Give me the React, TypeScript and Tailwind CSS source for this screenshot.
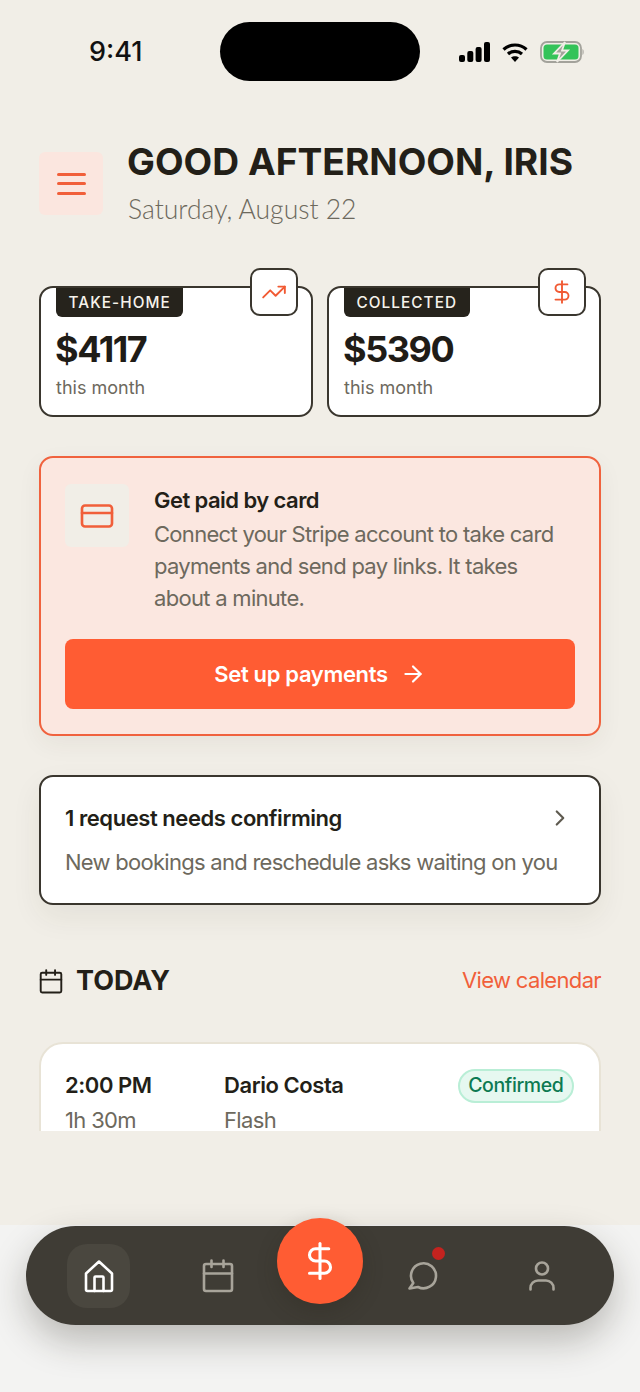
import type { ReactNode } from 'react'
import { ArrowRight, ChevronRight, CreditCard, DollarSign, TrendingUp } from 'lucide-react'

function CalendarIcon({ width, height, stroke }: { width: number; height: number; stroke: number }) {
  return (
    <svg width={width} height={height} viewBox="0 0 32 34" fill="none" stroke="currentColor" strokeWidth={stroke} strokeLinecap="round" strokeLinejoin="round" className="shrink-0">
      <rect x="2" y="5" width="28" height="27" rx="2" />
      <path d="M2 14.500h28M9.500 1.500v6.500M21.500 1.500v6.500" />
    </svg>
  )
}

function StatCard({ label, amount, icon }: { label: string; amount: string; icon: ReactNode }) {
  return (
    <div className="relative flex-1 h-[131px] bg-white rounded-[14px] border-2 border-[#3a362e] px-[15px]">
      <div className="inline-block h-[29px] rounded-b-[6px] bg-[#26231c] px-[12.500px] text-[15.300px] leading-[29px] font-medium tracking-[0.07em] text-[#f6f3ec]">
        {label}
      </div>
      <div className="-ml-[1px] mt-[10px] text-[36px] leading-[44px] font-bold tracking-[-0.04em] text-[#1f1c17]">{amount}</div>
      <div className="mt-[5px] text-[18px] leading-[24px] text-[#6d695d]">this month</div>
      <div className="absolute -top-[20px] right-[13px] w-12 h-12 flex items-center justify-center rounded-[10px] border-2 border-[#3a362e] bg-white text-[#f15a33]">
        {icon}
      </div>
    </div>
  )
}

export default function App() {
  return (
    <div className="w-[640px] h-[1392px] overflow-hidden flex flex-col bg-[#f1eee7] font-['Inter',sans-serif]">
      <div className="h-[1131px] overflow-hidden shrink-0">
        <div className="h-[104px] pt-[22px] pl-[89px] pr-[56px] flex items-start justify-between">
          <div className="w-[131px] mt-[14px] text-[27px] leading-[32px] font-medium text-[#111]">9:41</div>
          <div className="w-[200px] h-[59px] rounded-[30px] bg-black" />
          <div className="ml-auto mt-[19px] flex items-center gap-[12px]">
            <svg width="31" height="20" viewBox="0 0 31 20" fill="#000">
              <rect x="0" y="13" width="6" height="7" rx="2" />
              <rect x="8.300" y="9" width="6" height="11" rx="2" />
              <rect x="16.600" y="5" width="6" height="15" rx="2" />
              <rect x="25" y="0" width="6" height="20" rx="2" />
            </svg>
            <svg width="26" height="20" viewBox="0 0 26 20" fill="none" stroke="#000" strokeWidth="3.200">
              <path d="M1.500 7.500C8 1.500 18 1.500 24.500 7.500" />
              <path d="M6 12C10 8.500 16 8.500 20 12" />
              <path d="M13 20l-4-4.500c2.200-1.800 5.800-1.800 8 0z" fill="#000" stroke="none" />
            </svg>
            <svg width="44" height="22" viewBox="0 0 44 22">
              <rect x="1" y="1" width="40" height="20" rx="6" fill="none" stroke="#a3a29b" strokeWidth="1.800" />
              <rect x="3.500" y="3.500" width="35" height="15" rx="3.500" fill="#34c359" />
              <path d="M42.500 8c1.500 .5 1.500 5.500 0 6z" fill="#a3a29b" />
              <path d="M25 1l-11 11.500h6l-3 8.500 11-11.500h-6z" fill="#a3a29b" stroke="#f1eee7" strokeWidth="1.800" />
            </svg>
          </div>
        </div>

        <div className="mt-[37px] px-[39px] flex items-start gap-[25px]">
          <div className="mt-[11px] w-[64px] h-[63px] shrink-0 flex flex-col items-center justify-center gap-[6.500px] rounded-[6px] bg-[#fbe6df]">
            <div className="w-[29px] h-[3px] rounded-full bg-[#f15f3a]" />
            <div className="w-[29px] h-[3px] rounded-full bg-[#f15f3a]" />
            <div className="w-[29px] h-[3px] rounded-full bg-[#f15f3a]" />
          </div>
          <div>
            <div className="-ml-[1px] text-[37.200px] leading-[42px] font-bold whitespace-nowrap text-[#231f18]">GOOD AFTERNOON, IRIS</div>
            <div className="mt-[10px] font-['Lato',sans-serif] font-light text-[26.500px] leading-[32px] text-[#6d695d]">Saturday, August 22</div>
          </div>
        </div>

        <div className="mt-[61px] mx-[39px] flex gap-[14px]">
          <StatCard label="TAKE-HOME" amount="$4117" icon={<TrendingUp size={26} strokeWidth={1.75} />} />
          <StatCard label="COLLECTED" amount="$5390" icon={<DollarSign size={26} strokeWidth={1.75} />} />
        </div>

        <div className="mt-[39px] mx-[39px] h-[280px] rounded-[14px] border-2 border-[#f0623e] bg-[#fbe7e0] px-[24px] pt-[26px] shadow-[0_8px_24px_rgba(60,50,30,0.06)]">
          <div className="flex items-start gap-[25px]">
            <div className="w-[64px] h-[63px] shrink-0 flex items-center justify-center rounded-[6px] bg-[#f1eee7] text-[#f15f3a]">
              <CreditCard size={36} strokeWidth={1.75} />
            </div>
            <div>
              <div className="text-[22px] leading-[32px] font-semibold tracking-[-0.025em] text-[#231f18]">Get paid by card</div>
              <div className="mt-[2px] text-[22px] leading-[32px] tracking-[-0.032em] text-[#6d695d]">
                Connect your Stripe account to take card payments and send pay links. It takes about a minute.
              </div>
            </div>
          </div>
          <div className="mt-[25px] h-[70px] flex items-center justify-center gap-[12px] rounded-[8px] bg-[#ff5c33] text-white">
            <span className="text-[22px] font-semibold tracking-[-0.015em]">Set up payments</span>
            <ArrowRight size={26} strokeWidth={2} />
          </div>
        </div>

        <div className="mt-[39px] mx-[39px] h-[130px] rounded-[14px] border-2 border-[#3a362e] bg-white px-[24px] pt-[25px] shadow-[0_12px_30px_rgba(60,50,30,0.07)]">
          <div className="flex items-center justify-between">
            <span className="text-[22px] leading-[32px] font-semibold tracking-[-0.02em] text-[#231f18]">1 request needs confirming</span>
            <ChevronRight size={26} strokeWidth={2} className="text-[#5f5b50] mr-[2px]" />
          </div>
          <div className="mt-[12px] text-[22px] leading-[32px] tracking-[-0.033em] whitespace-nowrap text-[#6d695d]">New bookings and reschedule asks waiting on you</div>
        </div>

        <div className="mt-[58px] mx-[39px] flex items-center justify-between">
          <div className="flex items-center gap-[13px] text-[#231f18]">
            <CalendarIcon width={24} height={25} stroke={2.600} />
            <span className="text-[27px] leading-[36px] font-bold">TODAY</span>
          </div>
          <span className="-mt-[1px] text-[22px] tracking-[-0.03em] text-[#f15f3a]">View calendar</span>
        </div>

        <div className="mt-[43px] mx-[39px] h-[140px] rounded-[24px] border-2 border-[#e8e3d6] bg-white px-[24px] pt-[25px] flex items-start">
          <div className="w-[159px]">
            <div className="text-[22px] leading-[32px] font-semibold tracking-[-0.02em] text-[#231f18]">2:00 PM</div>
            <div className="mt-[3px] text-[22px] leading-[32px] tracking-[-0.03em] text-[#6d695d]">1h 30m</div>
          </div>
          <div className="flex-1">
            <div className="text-[22px] leading-[32px] font-semibold tracking-[-0.02em] text-[#231f18]">Dario Costa</div>
            <div className="mt-[3px] text-[22px] leading-[32px] tracking-[-0.03em] text-[#6d695d]">Flash</div>
          </div>
          <div className="mr-[1px] h-[34px] px-[8.500px] flex items-center rounded-full border-2 border-[#b9eed6] bg-[#e6f8f0] text-[19.500px] font-medium tracking-[-0.02em] text-[#0c7a52]">Confirmed</div>
        </div>
      </div>

      <div className="h-[94px] shrink-0" />

      <div className="flex-1 bg-[#f3f3f2] pt-[1px]">
        <div className="relative mx-[26px] h-[99px] rounded-[50px] bg-[#3f3c35] shadow-[0_16px_36px_rgba(40,35,25,0.28)] flex items-center pl-[41px] text-[#a8a49a]">
          <div className="w-[63px] h-[64px] shrink-0 rounded-[20px] bg-[#4a473f] flex items-center justify-center text-white">
            <svg width="32" height="34" viewBox="0 0 32 34" fill="none" stroke="currentColor" strokeWidth="2.600" strokeLinejoin="round" strokeLinecap="round">
              <path d="M3 14.500L16 2.500l13 12V30.500a1.500 1.500 0 0 1-1.500 1.500H4.500A1.500 1.500 0 0 1 3 30.500z" />
              <path d="M11.500 32V18.500a1 1 0 0 1 1-1h7a1 1 0 0 1 1 1V32" />
            </svg>
          </div>
          <div className="ml-[56px] w-[64px] shrink-0 flex justify-center">
            <CalendarIcon width={32} height={34} stroke={2.600} />
          </div>
          <div className="absolute left-[251px] -top-[8px] w-[86px] h-[86px] rounded-full bg-[#ff5c33] flex items-center justify-center text-white shadow-[0_8px_20px_rgba(40,35,25,0.25)]">
            <DollarSign size={42} strokeWidth={1.75} />
          </div>
          <div className="ml-[141px] relative w-[64px] shrink-0 flex justify-center">
            <svg width="34" height="34" viewBox="0 0 34 34" fill="none" stroke="currentColor" strokeWidth="2.600" strokeLinejoin="round">
              <path d="M3.500 29.500L7.300 24A12.500 12.500 0 1 1 12 28z" />
            </svg>
            <div className="absolute -top-[12px] left-[41px] w-[13px] h-[13px] rounded-full bg-[#c4231f]" />
          </div>
          <div className="ml-[55px] w-[64px] shrink-0 flex justify-center">
            <svg width="28" height="30" viewBox="0 0 28 30" fill="none" stroke="currentColor" strokeWidth="2.600" strokeLinecap="round">
              <circle cx="14" cy="7.500" r="6" />
              <path d="M2.500 28.500v-1.500a7.500 7.500 0 0 1 7.500-7.500h8a7.500 7.500 0 0 1 7.500 7.500v1.500" />
            </svg>
          </div>
        </div>
      </div>
    </div>
  )
}
